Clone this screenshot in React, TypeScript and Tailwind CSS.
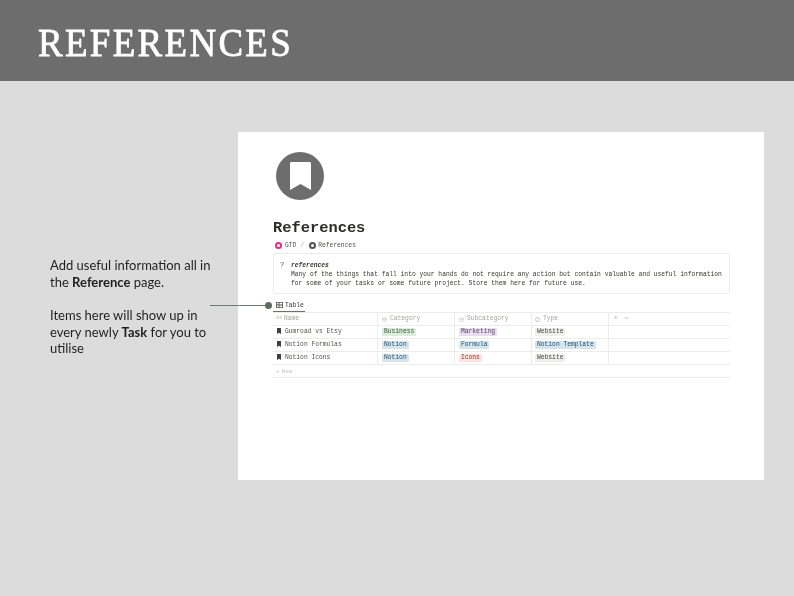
const mono = 'font-["Liberation_Mono",monospace]'

const tagColors: Record<string, string> = {
    green: 'bg-[#dbeddb] text-[#3b5a45]',
    purple: 'bg-[#e8deee] text-[#5a4368]',
    blue: 'bg-[#d3e5ef] text-[#2f5167]',
    red: 'bg-[#ffe2dd] text-[#7b3a32]',
    gray: 'bg-[#eeeeec] text-[#4a4a48]',
}

const rows = [
    { name: 'Gumroad vs Etsy', cat: ['Business', 'green'], sub: ['Marketing', 'purple'], type: ['Website', 'gray'] },
    { name: 'Notion Formulas', cat: ['Notion', 'blue'], sub: ['Formula', 'blue'], type: ['Notion Template', 'blue'] },
    { name: 'Notion Icons', cat: ['Notion', 'blue'], sub: ['Icons', 'red'], type: ['Website', 'gray'] },
]

function Tag({ label, color }: { label: string; color: string }) {
    return <span className={`px-[2px] h-[8px] leading-[8px] rounded-[1px] ${tagColors[color]}`}>{label}</span>
}

function Bookmark({ className }: { className: string }) {
    return (
        <svg viewBox="0 0 10 13" className={className} fill="currentColor" preserveAspectRatio="none">
            <path d="M0.6 0h8.8q0.6 0 0.6 0.6V13L5 10.2 0 13V0.6q0-0.6 0.6-0.6z" />
        </svg>
    )
}

function ListIcon() {
    return (
        <svg viewBox="0 0 8 8" className="w-[5px] h-[5px] text-[#c2c2c0]" fill="none" stroke="currentColor" strokeWidth="1">
            <path d="M0 1.5h8M0 4h8M0 6.5h8" />
        </svg>
    )
}

export default function App() {
    return (
        <div className="w-[794px] h-[596px] overflow-hidden bg-[#dcdcdc] font-['Lato',sans-serif]">
            <header className="h-[81px] bg-[#6d6d6d] pl-[38px] pt-[17px]">
                <h1 className="origin-left scale-x-[0.9] font-['Liberation_Serif',serif] text-[41px] leading-[50px] tracking-[2.6px] [-webkit-text-stroke:0.8px_white] text-white">REFERENCES</h1>
            </header>

            <main className="relative flex pt-[51px]">
                <div className="w-[238px] pl-[50px] pt-[125px] text-[13px] leading-[16.6px] text-[#1f1f1f] blur-[0.25px]">
                    <p>Add useful information all in<br />the <b>Reference</b> page.</p>
                    <p className="mt-[17px]">Items here will show up in<br />every newly <b>Task</b> for you to<br />utilise</p>
                </div>

                <section className={`w-[526px] h-[348px] bg-white pl-[35px] pr-[34px] pt-[20px] text-[#37352f] blur-[0.3px] ${mono}`}>
                    <div className="ml-[3px] w-[48px] h-[48px] rounded-full bg-[#6d6d6d] flex items-center justify-center">
                        <Bookmark className="w-[21px] h-[28px] text-white" />
                    </div>
                    <h2 className="mt-[18px] text-[15.4px] leading-[20px] font-bold text-[#2c2c2b]">References</h2>

                    <div className="mt-[2px] h-[10px] pt-[1px] flex items-center text-[6.3px] text-[#55534e]">
                        <span className="ml-[2px] w-[7px] h-[7px] rounded-full bg-[#e0307f] flex items-center justify-center mr-[3px]">
                            <span className="w-[3px] h-[3px] rounded-full bg-white" />
                        </span>
                        <span>GTD</span>
                        <span className="ml-[4px] mr-[5px] text-[#a8a8a6]">/</span>
                        <span className="w-[7px] h-[7px] rounded-full border-[2px] border-[#55534e] mr-[2px]" />
                        <span>References</span>
                    </div>

                    <div className="mt-[3px] h-[41px] border border-[#ececea] rounded-[2px] flex pl-[6px] pt-[7px] text-[6.3px] leading-[9px] text-[#37352f]">
                        <span className="w-[11px] shrink-0 text-[7px] text-[#55534e]">?</span>
                        <div className="whitespace-nowrap">
                            <div className="font-bold italic">references</div>
                            <div>Many of the things that fall into your hands do not require any action but contain valuable and useful information</div>
                            <div>for some of your tasks or some future project. Store them here for future use.</div>
                        </div>
                    </div>

                    <div className="mt-[3px] w-[32px] h-[15px] border-b border-[#6f6e69] flex items-center gap-[2px] pl-[3px] pt-[3px] text-[6.3px] text-[#37352f]">
                        <svg viewBox="0 0 8 7" className="w-[7px] h-[6px] text-[#55534e] -translate-y-px" fill="currentColor">
                            <path d="M0 0h8v7H0zM1 1v2h2V1zM1 4v2h2V4zM4 1v2h3V1zM4 4v2h3V4z" fillRule="evenodd" />
                        </svg>
                        Table
                    </div>

                    <div className="grid grid-cols-[105px_77px_77px_77px_1fr] border-t border-[#ececea] text-[6.3px]">
                        <div className="h-[13px] border-b border-r border-[#ececea] flex items-center gap-[2px] pl-[3px] text-[#a5a4a1]">
                            <span className="text-[5px] text-[#c2c2c0]">Aa</span>Name
                        </div>
                        <div className="h-[13px] border-b border-r border-[#ececea] flex items-center gap-[3px] pl-[4px] text-[#a5a4a1]"><ListIcon />Category</div>
                        <div className="h-[13px] border-b border-r border-[#ececea] flex items-center gap-[3px] pl-[4px] text-[#a5a4a1]"><ListIcon />Subcategory</div>
                        <div className="h-[13px] border-b border-r border-[#ececea] flex items-center gap-[3px] pl-[3px] text-[#a5a4a1]">
                            <span className="w-[5px] h-[5px] rounded-full border border-[#c2c2c0]" />Type
                        </div>
                        <div className="h-[13px] border-b border-[#ececea] flex items-center gap-[7px] pl-[5px] text-[#a5a4a1]"><span>+</span><span>⋯</span></div>

                        {rows.map(r => (
                            <div key={r.name} className="contents">
                                <div className="h-[13px] border-b border-r border-[#ececea] flex items-center gap-[2px] pl-[4px] text-[#55534e]">
                                    <Bookmark className="w-[4px] h-[6px] text-[#3f3f3d] -translate-y-px" />
                                    <span className="ml-[2px]">{r.name}</span>
                                </div>
                                <div className="h-[13px] border-b border-r border-[#ececea] flex items-center pl-[4px]"><Tag label={r.cat[0]} color={r.cat[1]} /></div>
                                <div className="h-[13px] border-b border-r border-[#ececea] flex items-center pl-[4px]"><Tag label={r.sub[0]} color={r.sub[1]} /></div>
                                <div className="h-[13px] border-b border-r border-[#ececea] flex items-center pl-[3px]"><Tag label={r.type[0]} color={r.type[1]} /></div>
                                <div className="h-[13px] border-b border-[#ececea]" />
                            </div>
                        ))}
                    </div>
                    <div className="h-[13px] pt-[1px] border-b border-[#ececea] flex items-center gap-[2px] pl-[3px] text-[6px] text-[#c2c2c0]">
                        <span>+</span>New
                    </div>
                </section>

                {/* connector from the note to the Table tab */}
                <div className="absolute left-[210px] top-[224px] w-[56px] h-px bg-[#6f7a72]" />
                <div className="absolute left-[265px] top-[221px] w-[7px] h-[7px] rounded-full bg-[#5f6b63]" />
            </main>
        </div>
    )
}
